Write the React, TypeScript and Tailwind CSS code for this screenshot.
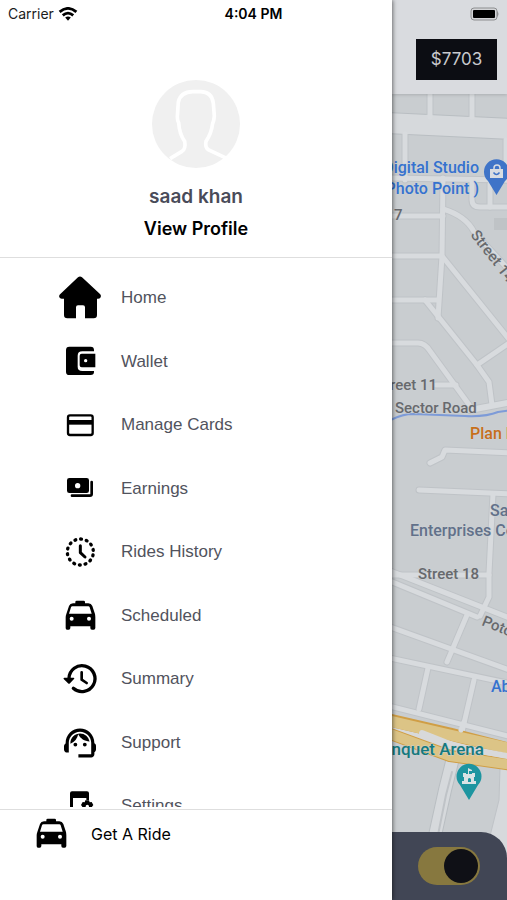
import type { ReactNode } from "react";

function Glyph({ children }: { children: ReactNode }) {
  return (
    <svg viewBox="0 0 132 132" className="size-11" fill="currentColor" aria-hidden="true">
      {children}
    </svg>
  );
}

const HomeIcon = () => (
  <Glyph>
    <path d="M60 4q6-5 12 0l54 50q5 6 1 11-2 3-7 3h-3v49q0 10-10 10H81V94q0-6-6-6H60q-6 0-6 6v33H28q-10 0-10-10V68h-7q-5 0-7-4-2-6 3-10z" />
  </Glyph>
);

const WalletIcon = () => (
  <Glyph>
    <path d="M34 23h64q10 0 10 10v4H73q-14 0-14 13v33q0 13 14 13h35v3q0 9-10 9H34q-10 0-10-10V33q0-10 10-10z" />
    <path
      fillRule="evenodd"
      d="M71 44h41v41H71q-6 0-6-6V50q0-6 6-6zM83 60a5 5 0 0 0-5 5a5 5 0 0 0 10 0a5 5 0 0 0-5-5z"
    />
  </Glyph>
);

const CardIcon = () => (
  <Glyph>
    <rect x="30" y="37" width="74" height="59" rx="6" fill="none" stroke="currentColor" strokeWidth="7" />
    <path d="M28 51h77v14H28z" />
  </Glyph>
);

const EarningsIcon = () => (
  <Glyph>
    <path
      fillRule="evenodd"
      d="M34 36h52q7 0 7 7v31q0 7-7 7H34q-7 0-7-7V43q0-7 7-7zM59 51a8 8 0 1 0 0 16a8 8 0 1 0 0-16z"
    />
    <path d="M101 48v36q0 5-5 5H42" fill="none" stroke="currentColor" strokeWidth="8" strokeLinecap="round" />
  </Glyph>
);

const RidesIcon = () => (
  <Glyph>
    <g fill="none" stroke="currentColor" strokeLinejoin="round" strokeLinecap="round">
      <circle cx="67" cy="66" r="39" strokeWidth="10" pathLength="140" strokeDasharray="1.5 8.500" strokeDashoffset="5" />
      <path d="M67 47v21l14 13" strokeWidth="9" />
    </g>
  </Glyph>
);

const TaxiIcon = () => (
  <Glyph>
    <path
      fillRule="evenodd"
      d="M56 20h21q4 0 4 4v4h10q9 0 12 8l8 24q1 5 1 10v32q0 5-5 5h-5q-5 0-5-5v-5H37v5q0 5-5 5h-5q-4 0-4-5V70q0-5 2-10l8-24q3-8 12-8h7v-4q0-4 4-4zM43 37q-3 0-4 3l-6 19h68l-6-19q-1-3-4-3zM41 68a6 6 0 1 0 0 12a6 6 0 1 0 0-12zM93 68a6 6 0 1 0 0 12a6 6 0 1 0 0-12z"
    />
  </Glyph>
);

const SummaryIcon = () => (
  <Glyph>
    <g fill="none" stroke="currentColor" strokeLinejoin="round" strokeLinecap="round">
      <path d="M33 64A39 39 0 1 1 46 94" strokeWidth="10" />
      <path d="M71 46v22l15 10" strokeWidth="8" />
    </g>
    <path d="M19 62h28q4 1 1 4L36 79q-3 3-6 0L17 66q-2-3 2-4z" />
  </Glyph>
);

const SupportIcon = () => (
  <Glyph>
    <path
      transform="scale(4.8) translate(1.75 1.75)"
      d="M21 12.220C21 6.730 16.740 3 12 3c-4.690 0-9 3.650-9 9.280-.6.340-1 .980-1 1.720v2c0 1.100.9 2 2 2h1v-6.100c0-3.870 3.130-7 7-7s7 3.130 7 7V19h-8v2h8c1.100 0 2-.9 2-2v-1.220c.590-.310 1-.920 1-1.640v-2.300c0-.7-.410-1.310-1-1.620zM10.300 13a1.200 1.200 0 1 1-2.400 0a1.200 1.200 0 0 1 2.400 0zM16.200 13a1.200 1.200 0 1 1-2.400 0a1.200 1.200 0 0 1 2.400 0zM18 11.030A6.040 6.040 0 0 0 12.050 6c-3.030 0-6.290 2.510-6.030 6.450a8.075 8.075 0 0 0 4.860-5.890c1.310 2.630 4 4.440 7.120 4.470z"
    />
  </Glyph>
);

const SettingsIcon = () => (
  <Glyph>
    <path d="M42 22h45q6 0 6 6v20h-8v-6H45v58h40v-8h8v18H36V28q0-6 6-6z" />
    <path
      fillRule="evenodd"
      d="M82 49h11l2 6 6-1 5 9-4 5 4 5-5 9-6-1-2 6H82l-2-6-6 1-5-9 4-5-4-5 5-9 6 1zM88 62a5 5 0 1 0 0 10a5 5 0 1 0 0-10z"
    />
  </Glyph>
);

const menu: { label: string; icon: ReactNode }[] = [
  { label: "Home", icon: <HomeIcon /> },
  { label: "Wallet", icon: <WalletIcon /> },
  { label: "Manage Cards", icon: <CardIcon /> },
  { label: "Earnings", icon: <EarningsIcon /> },
  { label: "Rides History", icon: <RidesIcon /> },
  { label: "Scheduled", icon: <TaxiIcon /> },
  { label: "Summary", icon: <SummaryIcon /> },
  { label: "Support", icon: <SupportIcon /> },
  { label: "Settings", icon: <SettingsIcon /> },
];

const minorRoads = [
  "M430 90V117",
  "M472 90V117",
  "M405 134V180",
  "M506 140V180",
  "M385 178L507 180",
  "M443 178L442 256L438 318",
  "M385 216H443",
  "M443 209Q466 216 474 232L507 268",
  "M472 180V200Q472 207 480 207H512",
  "M490 184V207",
  "M385 256H442L512 343",
  "M385 300H438",
  "M425 300L477 365L512 341",
  "M477 365L489 382L492 405",
  "M385 343H418Q425 343 430 351L470 406",
  "M436 385H456",
  "M430 463L442 457L445 450L512 453",
  "M419 490L512 494",
  "M493 494L489 573V597L480 616",
  "M392 575H489",
  "M385 569L512 619",
  "M385 579L477 617",
  "M467 615L447 662",
  "M385 625L512 671",
  "M385 657L512 684",
  "M428 668L419 709",
  "M474 680L462 732",
  "M385 705L512 737",
];

function CityMap() {
  return (
    <svg
      viewBox="392 94 115 806"
      preserveAspectRatio="xMinYMin slice"
      className="absolute inset-0 size-full"
      role="img"
      aria-label="Map"
    >
      <rect x="380" y="94" width="1200" height="806" fill="#c9cdd0" />
      <g fill="none" strokeLinejoin="round" strokeLinecap="round">
        <path d="M385 123L512 129" stroke="#b9bec2" strokeWidth="22" />
        {minorRoads.map((d) => (
          <path key={d} d={d} stroke="#bfc3c7" strokeWidth="7" />
        ))}
        <path d="M470 410L512 402" stroke="#bfc3c7" strokeWidth="8" />
        <path d="M385 123L512 129" stroke="#d6d9dc" strokeWidth="20" />
        {minorRoads.map((d) => (
          <path key={d} d={d} stroke="#d8dbde" strokeWidth="5" />
        ))}
        <path d="M470 410L512 402" stroke="#d8dbde" strokeWidth="6" />
        <path d="M385 424Q398 414 414 414L465 416Q486 417 498 412L512 410" stroke="#7d9bd8" strokeWidth="2" />
        <path d="M453 758L445 790L434 840" stroke="#b9bec2" strokeWidth="14" strokeLinecap="butt" />
        <path d="M453 758L445 790L434 840" stroke="#d6d9dc" strokeWidth="12" strokeLinecap="butt" />
        <path d="M452 772L446 795L437 840" stroke="#bfc3c7" strokeWidth="2" />
        <path d="M500 768L499 800L489 840L512 860V768z" fill="#d6d9dc" stroke="#bfc3c7" />
        <path d="M385 727L512 758" stroke="#d8d9da" strokeWidth="12" />
        <path d="M385 719L450 734L512 750" stroke="#d09e45" strokeWidth="13" />
        <path d="M385 720L450 735L512 749" stroke="#dcc486" strokeWidth="11" />
        <path d="M385 732L450 756L512 765" stroke="#d09e45" strokeWidth="12" />
        <path d="M385 732L450 756L512 765" stroke="#dcc486" strokeWidth="10" />
        <path d="M422 733L455 746L512 757" stroke="#d8d9da" strokeWidth="6" />
        <path d="M464 722L461 730" stroke="#d8dbde" strokeWidth="5" />
      </g>
      <path d="M494 218H507V230H494z" fill="#bfc3c6" />
      <g
        className="font-['Roboto','Noto_Sans',sans-serif] text-[16px]"
        stroke="#cdd1d4"
        strokeWidth="1"
        paintOrder="stroke"
        strokeLinejoin="round"
      >
        <g fill="#3572cf" className="font-medium">
          <text x="479" y="173" textAnchor="end">Digital Studio</text>
          <text x="479" y="194" textAnchor="end">(Photo Point )</text>
          <text x="491" y="692">Ab</text>
        </g>
        <g fill="#67696d" className="text-[15px] font-medium">
          <text x="394" y="220">7</text>
          <text x="437" y="390" textAnchor="end">Street 11</text>
          <text x="395" y="413">Sector Road</text>
          <text x="418" y="579">Street 18</text>
          <text x="470" y="235" transform="rotate(52 470 235)">Street 14</text>
          <text x="481" y="625" transform="rotate(22 481 625)">Potohar</text>
        </g>
        <text x="470" y="439" fill="#c76f1b" className="font-medium">Plan B</text>
        <g fill="#62718a" className="font-medium">
          <text x="490" y="516">Saad</text>
          <text x="410" y="536">Enterprises Co</text>
        </g>
        <text x="484" y="755" textAnchor="end" fill="#15797d" className="text-[17px] font-medium">Banquet Arena</text>
      </g>
      <path d="M496.500 195L488 181A12.500 12.500 0 1 1 505 181z" fill="#3f74c8" />
      <path d="M490 169h13v9h-13z" fill="#d9dde2" />
      <path d="M494 170v-2a3 3 0 0 1 6 0v2" fill="none" stroke="#d9dde2" strokeWidth="1.500" />
      <path d="M493.500 172.500q3 4 6 0" fill="none" stroke="#3f74c8" strokeWidth="1.500" />
      <path d="M469 800L460 785A12.500 12.500 0 1 1 478 785z" fill="#1d95a0" />
      <path d="M462 784v-3h2v-4h-1v-4h3v1h2v-6l4 2v1h-3v3h3v-1h3v4h-1v4h2v3z" fill="#d9e3e5" />
      <path d="M468 782v-3q1-2 3 0v3z" fill="#1d95a0" />
    </svg>
  );
}

function StatusBar() {
  return (
    <header className="absolute inset-x-0 top-0 z-20 grid h-7 grid-cols-3 items-center px-2 font-['Inter',sans-serif] text-sm text-[#1c1c1c]">
      <div className="flex items-center gap-1">
        <span>Carrier</span>
        <svg viewBox="0 0 54 40" className="h-[14px] w-5" fill="none" stroke="#000" strokeWidth="8" aria-label="Wi-Fi">
          <path d="M3 14Q27-6 51 14" />
          <path d="M12 24Q27 11 42 24" />
          <path d="M19 30Q27 24 35 30L27 39z" fill="#000" stroke="none" />
        </svg>
      </div>
      <span className="text-center font-semibold text-black">4:04 PM</span>
      <svg viewBox="0 0 30 14" className="h-[14px] w-[30px] justify-self-end" aria-label="Battery full">
        <rect x="2" y="1" width="26" height="12" rx="3" fill="#d3d4d7" stroke="#8d8e90" />
        <rect x="4" y="3" width="22" height="8" rx="1" fill="#000" />
        <path d="M28 4q3 3 0 6z" fill="#8d8e90" />
      </svg>
    </header>
  );
}

function Drawer() {
  return (
    <aside className="z-10 flex w-[392px] shrink-0 flex-col bg-white shadow-[1px_0_4px_rgba(0,0,0,0.5)]">
      <section className="flex h-[258px] flex-col items-center border-b border-[#dedede] pt-20 font-['Inter',sans-serif]">
        <svg viewBox="0 0 264 264" className="size-[88px]" role="img" aria-label="Profile picture">
          <circle cx="132" cy="132" r="132" fill="#f0f0f0" />
          <path
            d="M54 236L90 214Q102 206 98 184Q82 162 80 128Q76 122 76 110L79 66Q86 36 122 35H146Q180 36 184 70L187 108Q186 122 182 130Q178 162 162 184Q158 202 170 210L226 236"
            fill="none"
            stroke="#fff"
            strokeWidth="11"
          />
        </svg>
        <h1 className="mt-[17px] text-[19px] leading-6 font-semibold text-[#494b59]">saad khan</h1>
        <button type="button" className="mt-2 text-[18px] leading-6 font-semibold text-black">
          View Profile
        </button>
      </section>
      <nav className="min-h-0 flex-1 overflow-hidden pt-2">
        <ul className="grid h-[572px] auto-rows-fr">
          {menu.map(({ label, icon }) => (
            <li key={label} className="flex">
              <a
                href="#"
                className="flex flex-1 items-center gap-4 pl-[55px] font-['Liberation_Sans',Arial,sans-serif] text-[17px] text-[#51535d]"
              >
                <span className="flex w-[50px] justify-center text-black">{icon}</span>
                {label}
              </a>
            </li>
          ))}
        </ul>
      </nav>
      <div className="mt-[2px] h-[91px] border-t border-[#dedede]">
        <a
          href="#"
          className="flex h-12 items-center gap-[18px] pl-[29px] font-['Inter',sans-serif] text-base text-black"
        >
          <TaxiIcon />
          Get A Ride
        </a>
      </div>
    </aside>
  );
}

export default function App() {
  return (
    <div className="relative flex h-screen overflow-hidden bg-[#c9cdd0]">
      <StatusBar />
      <Drawer />
      <main className="flex min-w-0 flex-1 flex-col">
        <div className="z-[1] flex h-[94px] justify-end bg-[#d9dbdf] pt-[39px] pr-[10px] shadow-[0_1px_3px_rgba(0,0,0,0.15)]">
          <button
            type="button"
            className="h-[41px] w-[81px] bg-[#0c0d13] font-['Inter',sans-serif] text-[17px] text-[#c8c9cd]"
          >
            $7703
          </button>
        </div>
        <div className="relative flex min-h-0 flex-1 flex-col justify-end">
          <CityMap />
          <div className="relative flex h-[68px] justify-end rounded-tr-[26px] bg-[#414655] pt-[15px] pr-[27px]">
            <label className="relative h-[38px] w-[62px]">
              <input type="checkbox" defaultChecked aria-label="Online" className="peer sr-only" />
              <span className="flex size-full items-center rounded-full bg-[#87783f] px-[2px] peer-checked:justify-end">
                <span className="size-[34px] rounded-full bg-[#0f1016]" />
              </span>
            </label>
          </div>
        </div>
      </main>
    </div>
  );
}
